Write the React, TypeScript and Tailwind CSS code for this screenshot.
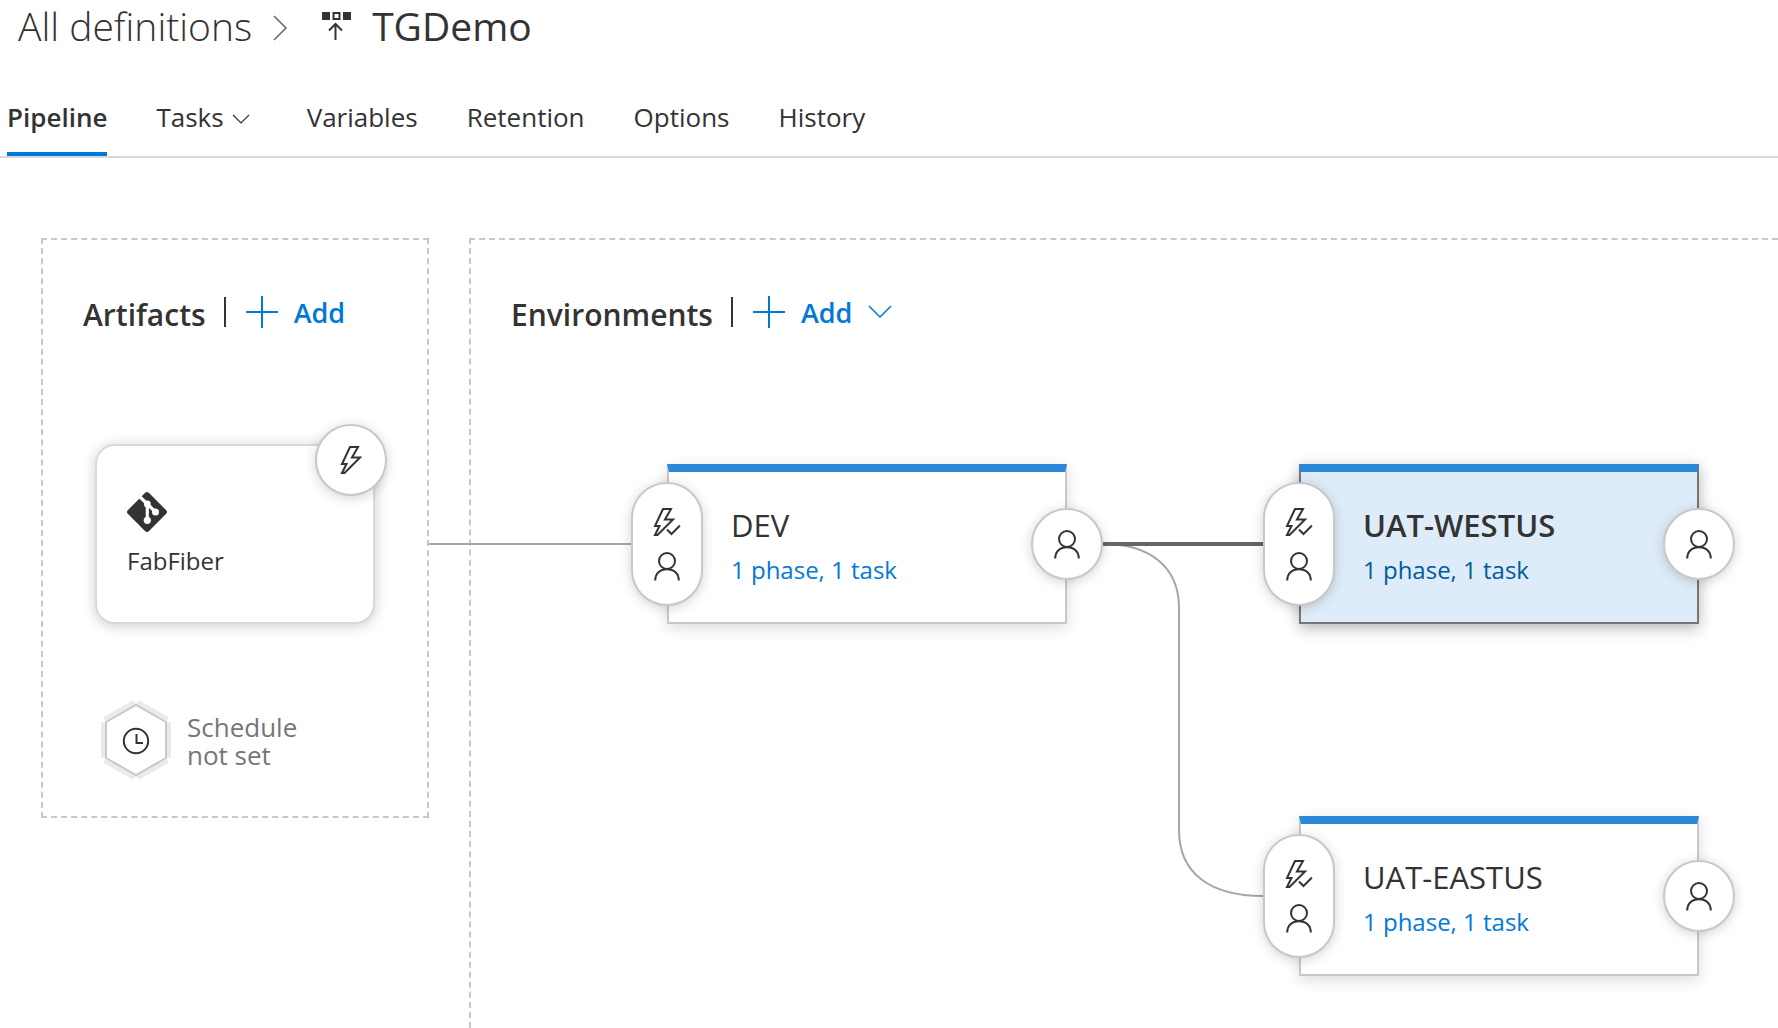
import type { ReactNode } from "react";

function Bolt() {
  return (
    <svg width="22" height="28" viewBox="0 0 22 28" fill="none" stroke="currentColor" strokeWidth="2" aria-hidden="true">
      <path d="M10 1H18L12 11.5H20L4.5 27H2L6.5 18H2Z" />
    </svg>
  );
}

function BoltCheck() {
  return (
    <svg width="28" height="28" viewBox="0 0 28 28" fill="none" stroke="currentColor" strokeWidth="2" aria-hidden="true">
      <path d="M10 1H18L12 11.5H20L4.5 27H2L6.5 18H2Z" />
      <path d="M14 21.5L18.5 26L27 17.5" />
    </svg>
  );
}

function Person() {
  return (
    <svg width="26" height="29" viewBox="0 0 26 29" fill="none" stroke="currentColor" strokeWidth="2" aria-hidden="true">
      <circle cx="13" cy="9" r="8" />
      <path d="M1.2 28.5C1.2 21.5 6 17.2 13 17.2S24.8 21.5 24.8 28.5" />
    </svg>
  );
}

function ReleaseIcon() {
  return (
    <svg width="30" height="30" viewBox="0 0 30 30" fill="none" stroke="currentColor" strokeWidth="2" aria-hidden="true">
      <path d="M0 1H8V9H0ZM21 1H29V9H21Z" fill="currentColor" stroke="none" />
      <path d="M11.5 2H17.5V8H11.5Z" />
      <path d="M13.5 29V13M7 19.5L13.5 13L20 19.5" />
    </svg>
  );
}

function GitIcon() {
  return (
    <svg width="40" height="40" viewBox="0 0 40 40" aria-hidden="true">
      <path
        fill="currentColor"
        d="M18.2 0.8Q20 -0.8 21.8 0.8L39.2 18.2Q40.8 20 39.2 21.8L21.8 39.2Q20 40.8 18.2 39.2L0.8 21.8Q-0.8 20 0.8 18.2Z"
      />
      <g fill="none" stroke="#fff" strokeWidth="3.2">
        <path d="M11 3L20.3 12L28.5 20" />
        <path d="M20.3 12V28" />
      </g>
      <g fill="#fff">
        <circle cx="20.3" cy="12" r="3.4" />
        <circle cx="28.5" cy="20" r="3.5" />
        <circle cx="20.3" cy="28.3" r="3.6" />
      </g>
    </svg>
  );
}

function Plus() {
  return (
    <svg width="32" height="32" viewBox="0 0 32 32" fill="none" stroke="currentColor" strokeWidth="2" aria-hidden="true">
      <path d="M0 16H32M16 0V32" />
    </svg>
  );
}

function ScheduleIcon() {
  return (
    <svg width="70" height="80" viewBox="0 0 70 80" fill="none" aria-hidden="true">
      <path
        stroke="#eaeaea"
        strokeWidth="5"
        d="M2.5 22V58M67.5 22V58M3.5 19.4L33.5 2.4M36.5 2.4L66.5 19.4M3.5 60.6L33.5 77.6M36.5 77.6L66.5 60.6"
      />
      <path fill="#fff" stroke="#c8c8c8" strokeWidth="2" d="M5 22L35 5L65 22V58L35 75L5 58Z" />
      <g stroke="#333" strokeWidth="2">
        <circle cx="35" cy="41" r="12.2" />
        <path d="M35.5 34V43H42" />
      </g>
    </svg>
  );
}

const badge =
  "flex w-18 items-center justify-center rounded-full border-2 border-[#c8c8c8] bg-white shadow-[0_2px_12px_rgba(0,0,0,0.18)]";

function SectionHeading({ title, menu }: { title: string; menu?: boolean }) {
  return (
    <div className="flex h-10 items-center whitespace-nowrap">
      <h2 className="pt-1.5 text-[30px] leading-10 font-semibold">{title}</h2>
      <span className="ml-[18px] h-[30px] w-0.5 bg-[#333]" />
      <button className="ml-5 flex items-center text-[27px] leading-10 font-semibold text-[#0078d7]">
        <Plus />
        <span className="ml-4 pt-0.5">Add</span>
        {menu && (
          <svg className="ml-4" width="24" height="14" viewBox="0 0 24 14" fill="none" stroke="currentColor" strokeWidth="1.5" aria-hidden="true">
            <path d="M1 1L12 12L23 1" />
          </svg>
        )}
      </button>
    </div>
  );
}

function Stage({ name, selected, className = "" }: { name: string; selected?: boolean; className?: string }) {
  return (
    <article
      className={`relative h-40 w-[400px] border-2 border-t-8 border-t-[#2b88d8] pt-[33px] pl-[62px] ${
        selected
          ? "border-x-[#767676] border-b-[#767676] bg-[#deecf9] shadow-[0_4px_14px_rgba(0,0,0,0.3)]"
          : "border-x-[#c8c8c8] border-b-[#c8c8c8] bg-white shadow-[0_4px_14px_rgba(0,0,0,0.14)]"
      } ${className}`}
    >
      <h3 className={`text-[31px] leading-10 ${selected ? "font-semibold" : "font-normal"}`}>{name}</h3>
      <a href="#tasks" className={`mt-[5px] block text-[24px] leading-10 ${selected ? "text-[#005a9e]" : "text-[#0078d7]"}`}>
        1 phase, 1 task
      </a>
      <button aria-label={`${name} pre-deployment conditions`} className={`absolute top-2.5 -left-[38px] h-31 flex-col gap-4 ${badge}`}>
        <BoltCheck />
        <Person />
      </button>
      <button aria-label={`${name} post-deployment conditions`} className={`absolute top-9 -right-[38px] h-18 ${badge}`}>
        <Person />
      </button>
    </article>
  );
}

function Tab({ children, active }: { children: ReactNode; active?: boolean }) {
  return (
    <a
      href="#tab"
      aria-current={active ? "page" : undefined}
      className={`flex items-center border-b-4 pb-[17px] text-[26px] leading-9 ${
        active ? "border-[#0078d7] font-semibold" : "border-transparent"
      }`}
    >
      {children}
    </a>
  );
}

export default function App() {
  return (
    <div className="flex min-h-screen flex-col overflow-hidden bg-white font-['Open_Sans',sans-serif] text-[#333]">
      <header className="flex h-[52px] items-center pl-[18px] whitespace-nowrap">
        <a href="#definitions" className="text-[39px] leading-[52px] font-light">
          All definitions
        </a>
        <svg className="mt-1 ml-5" width="16" height="26" viewBox="0 0 16 26" fill="none" stroke="#666" strokeWidth="1.5" aria-hidden="true">
          <path d="M2 1L14 13L2 25" />
        </svg>
        <span className="ml-[34px]">
          <ReleaseIcon />
        </span>
        <h1 className="ml-5 text-[39px] leading-[52px]">TGDemo</h1>
      </header>

      <nav className="mt-[47px] flex gap-[49px] border-b-2 border-[#d9d9d9] pl-[7px]">
        <Tab active>Pipeline</Tab>
        <Tab>
          Tasks
          <svg className="mx-2 mt-1" width="18" height="10" viewBox="0 0 18 10" fill="none" stroke="currentColor" strokeWidth="1.2" aria-hidden="true">
            <path d="M1 1L9 9L17 1" />
          </svg>
        </Tab>
        <Tab>Variables</Tab>
        <Tab>Retention</Tab>
        <Tab>Options</Tab>
        <Tab>History</Tab>
      </nav>

      <main className="flex flex-1 items-start gap-10 pt-20 pl-[41px]">
        <section className="w-[388px] shrink-0 border-2 border-dashed border-[#c8c8c8] pt-[52px] pb-9 pl-10">
          <SectionHeading title="Artifacts" />
          <article className="relative mt-[112px] ml-3 h-45 w-[280px] rounded-[20px] border-2 border-[#d9d9d9] bg-white pt-[46px] pl-[30px] shadow-[0_2px_14px_rgba(0,0,0,0.2)]">
            <GitIcon />
            <p className="mt-[11px] text-[24px] leading-9">FabFiber</p>
            <button aria-label="Continuous deployment trigger" className={`absolute -top-[22px] -right-3.5 h-18 ${badge}`}>
              <Bolt />
            </button>
          </article>
          <button className="mt-[76px] ml-[18px] flex items-center gap-4 text-left text-[26px] leading-7 text-[#767676]">
            <ScheduleIcon />
            <span className="pt-0.5">
              Schedule
              <br />
              not set
            </span>
          </button>
        </section>

        <section className="relative flex-1 self-stretch border-2 border-r-0 border-b-0 border-dashed border-[#c8c8c8] pt-[52px] pb-12 pl-10">
          <SectionHeading title="Environments" menu />
          <svg className="absolute top-[224px] -left-[42px]" width="900" height="500" viewBox="0 0 900 500" fill="none" stroke="#a6a6a6" strokeWidth="2" aria-hidden="true">
            <path d="M0 80H240" />
            <path d="M674 80C720 80 750 102 750 144V366C750 410 782 432 834 432" />
            <path d="M674 80H834" stroke="#666" strokeWidth="4" />
          </svg>
          <div className="mt-[132px] ml-[156px] grid grid-cols-[400px_400px] gap-x-[232px] gap-y-48">
            <Stage name="DEV" />
            <Stage name="UAT-WESTUS" selected />
            <Stage name="UAT-EASTUS" className="col-start-2" />
          </div>
        </section>
      </main>
    </div>
  );
}
